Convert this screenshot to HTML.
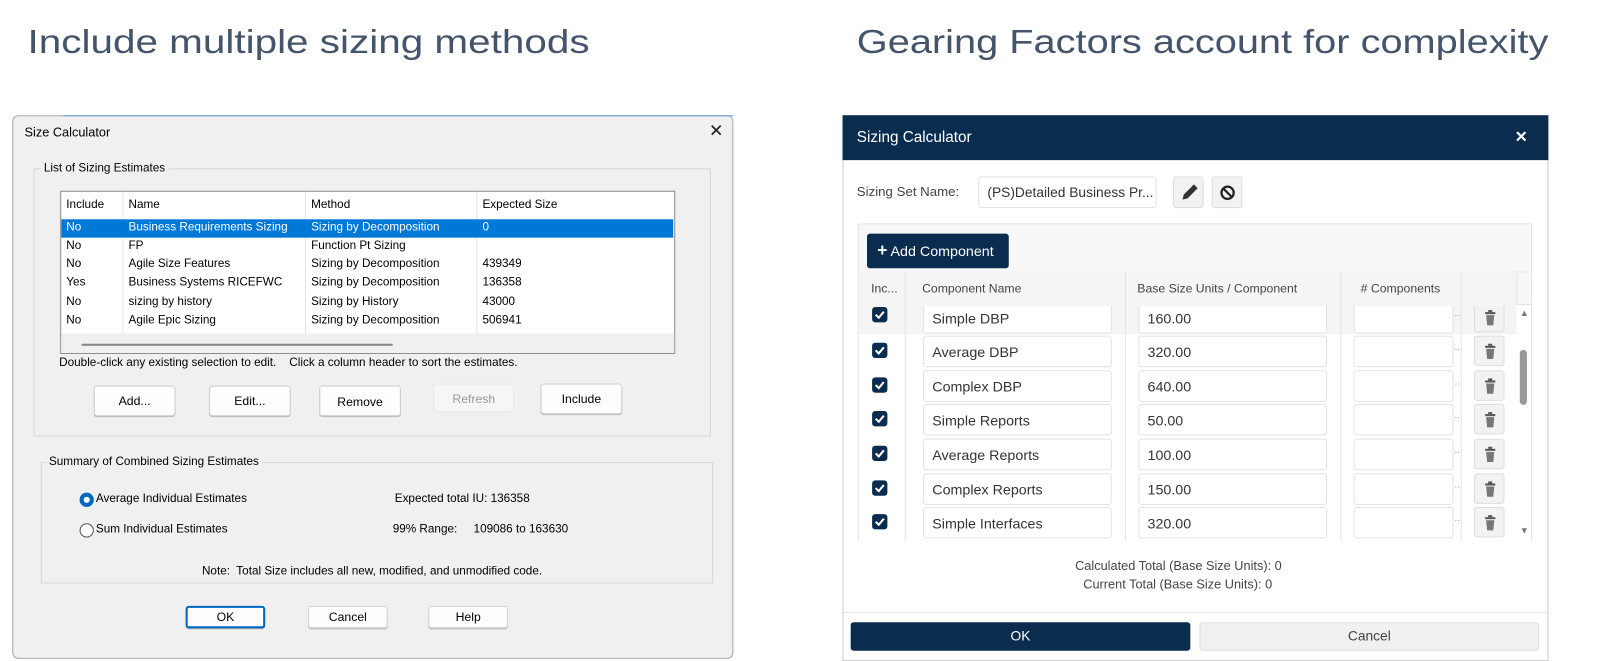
<!DOCTYPE html>
<html><head><meta charset="utf-8"><style>
*{box-sizing:border-box;margin:0;padding:0}
body{width:1600px;height:661px;background:#fff;overflow:hidden;font-family:"Liberation Sans",sans-serif;position:relative}
#w{position:absolute;left:0;top:0;width:1570px;height:648px;transform:scale(1.02);transform-origin:0 0}
.a{position:absolute}
.t{position:absolute;white-space:nowrap}
.s{font-size:11.5px;color:#000}
.wb{position:absolute;background:#fdfdfd;border:1px solid #d0d0d0;border-radius:3px;box-shadow:0 1px 0 #bbb;font-size:12px;text-align:center}
.r{position:absolute;left:0;width:600px;height:18px;font-size:11.5px}
.r span{position:absolute;top:2px}
.inp{position:absolute;background:#fff;border:1px solid #e2e2e2;border-radius:3px;font-size:14px;color:#333;padding-left:8px;line-height:30px;height:31px}
.tr{position:absolute;width:30px;height:30px;background:#f2f2f2;border:1px solid #ddd;border-radius:3px}
.cb{position:absolute;width:15px;height:15px;background:#0a2d4f;border-radius:3px}
.h{position:absolute;white-space:nowrap;font-size:12px;color:#444;z-index:5;top:10px}
</style></head><body><div id="w">
<svg class="a" style="left:0;top:0" width="1600" height="80">
<text x="27" y="52" font-family="Liberation Sans" font-size="33" fill="#44546a" textLength="551" lengthAdjust="spacingAndGlyphs">Include multiple sizing methods</text>
<text x="840" y="52" font-family="Liberation Sans" font-size="33" fill="#44546a" textLength="678" lengthAdjust="spacingAndGlyphs">Gearing Factors account for complexity</text>
</svg>

<!-- LEFT DIALOG -->
<div class="a" style="left:12px;top:113px;width:707px;height:533px;background:#f0f0f0;border:1px solid #a8a8a8;border-radius:6px"></div>
<div class="a" style="left:62px;top:113px;width:657px;height:1px;background:#6a9bd8"></div>
<div class="t s" style="left:24px;top:123px;font-size:12.5px">Size Calculator</div>
<div class="t" style="left:695px;top:119px;font-size:17px;color:#222">✕</div>

<div class="a" style="left:33px;top:165px;width:664px;height:263px;border:1px solid #d8d8d8"></div>
<div class="t s" style="left:40px;top:159px;background:#f0f0f0;padding:0 3px">List of Sizing Estimates</div>
<div class="a" style="left:59px;top:187px;width:603px;height:160px;background:#fff;border:1px solid #888;overflow:hidden">
 <div class="a" style="left:60px;top:0;width:1px;height:140px;background:#e6e6e6"></div>
 <div class="a" style="left:239px;top:0;width:1px;height:140px;background:#e6e6e6"></div>
 <div class="a" style="left:407px;top:0;width:1px;height:140px;background:#e6e6e6"></div>
 <div class="r" style="top:5px"><span style="left:5px">Include</span><span style="left:66px">Name</span><span style="left:245px">Method</span><span style="left:413px">Expected Size</span></div>
 <div class="r" style="top:27px;background:#0078d7;color:#fff"><span style="left:5px">No</span><span style="left:66px">Business Requirements Sizing</span><span style="left:245px">Sizing by Decomposition</span><span style="left:413px">0</span></div>
 <div class="r" style="top:45px"><span style="left:5px">No</span><span style="left:66px">FP</span><span style="left:245px">Function Pt Sizing</span></div>
 <div class="r" style="top:63px"><span style="left:5px">No</span><span style="left:66px">Agile Size Features</span><span style="left:245px">Sizing by Decomposition</span><span style="left:413px">439349</span></div>
 <div class="r" style="top:81px"><span style="left:5px">Yes</span><span style="left:66px">Business Systems RICEFWC</span><span style="left:245px">Sizing by Decomposition</span><span style="left:413px">136358</span></div>
 <div class="r" style="top:100px"><span style="left:5px">No</span><span style="left:66px">sizing by history</span><span style="left:245px">Sizing by History</span><span style="left:413px">43000</span></div>
 <div class="r" style="top:118px"><span style="left:5px">No</span><span style="left:66px">Agile Epic Sizing</span><span style="left:245px">Sizing by Decomposition</span><span style="left:413px">506941</span></div>
 <div class="a" style="left:0;top:139px;width:603px;height:21px;background:#f0f0f0"></div>
 <div class="a" style="left:20px;top:149px;width:305px;height:2px;background:#888"></div>
</div>
<div class="t s" style="left:58px;top:350px">Double-click any existing selection to edit.&nbsp;&nbsp;&nbsp; Click a column header to sort the estimates.</div>
<div class="wb" style="left:92px;top:378px;width:80px;height:30px;line-height:28px">Add...</div>
<div class="wb" style="left:205px;top:378px;width:80px;height:30px;line-height:28px">Edit...</div>
<div class="wb" style="left:313px;top:378px;width:80px;height:30px;line-height:30px">Remove</div>
<div class="wb" style="left:425px;top:376px;width:79px;height:28px;line-height:28px;background:#f6f6f6;color:#999;box-shadow:none;border-color:#e8e8e8">Refresh</div>
<div class="wb" style="left:530px;top:376px;width:80px;height:30px;line-height:28px">Include</div>

<div class="a" style="left:40px;top:453px;width:659px;height:119px;border:1px solid #d8d8d8"></div>
<div class="t s" style="left:46px;top:447px;background:#f0f0f0;padding:0 2px">Summary of Combined Sizing Estimates</div>
<div class="a" style="left:78px;top:483px;width:14px;height:14px;border-radius:50%;background:#0067c0"></div>
<div class="a" style="left:82px;top:487px;width:6px;height:6px;border-radius:50%;background:#fff"></div>
<div class="t s" style="left:94px;top:483px">Average Individual Estimates</div>
<div class="a" style="left:78px;top:513px;width:14px;height:14px;border-radius:50%;border:1px solid #555;background:#fff"></div>
<div class="t s" style="left:94px;top:513px">Sum Individual Estimates</div>
<div class="t s" style="left:387px;top:483px">Expected total IU: 136358</div>
<div class="t s" style="left:385px;top:513px">99% Range:&nbsp;&nbsp;&nbsp;&nbsp; 109086 to 163630</div>
<div class="t s" style="left:198px;top:554px">Note:&nbsp; Total Size includes all new, modified, and unmodified code.</div>
<div class="wb" style="left:182px;top:594px;width:78px;height:22px;line-height:19px;border:2px solid #0067c0">OK</div>
<div class="wb" style="left:302px;top:594px;width:78px;height:22px;line-height:21px">Cancel</div>
<div class="wb" style="left:420px;top:594px;width:78px;height:22px;line-height:21px">Help</div>

<!-- RIGHT DIALOG -->
<div class="a" style="left:826px;top:113px;width:692px;height:535px;background:#fff;border:1px solid #ccc"></div>
<div class="a" style="left:826px;top:113px;width:692px;height:44px;background:#0a2d4f"></div>
<div class="t" style="left:840px;top:126px;font-size:15px;color:#fff">Sizing Calculator</div>
<div class="t" style="left:1485px;top:125px;font-size:15px;color:#fff;font-weight:bold">✕</div>
<div class="t" style="left:840px;top:180px;font-size:13px;color:#444">Sizing Set Name:</div>
<div class="inp" style="left:959px;top:173px;width:175px;font-size:13.5px">(PS)Detailed Business Pr...</div>
<div class="a" style="left:1150px;top:173px;width:30px;height:31px;background:#f2f2f2;border:1px solid #ddd;border-radius:3px"><svg width="30" height="31"><path d="M9 21l1-4 8-8 3 3-8 8z M18 9l1.5-1.5 3 3L21 12" fill="#333" stroke="#333" stroke-width="1"/></svg></div>
<div class="a" style="left:1188px;top:173px;width:30px;height:31px;background:#f2f2f2;border:1px solid #ddd;border-radius:3px"><svg width="30" height="31"><circle cx="14.5" cy="15" r="6" fill="none" stroke="#222" stroke-width="2.2"/><path d="M10.5 11l8 8" stroke="#222" stroke-width="2.2"/></svg></div>

<div class="a" style="left:841px;top:219px;width:661px;height:311px;background:#f8f8f8;border:1px solid #e4e4e4"></div>
<div class="a" style="left:850px;top:229px;width:139px;height:34px;background:#0a2d4f;border-radius:3px;color:#fff;font-size:14px;line-height:34px;padding-left:10px"><b style="font-size:17px">+</b> Add Component</div>
<div class="a" style="left:842px;top:266px;width:659px;height:264px;background:#fff;overflow:hidden">
 <div class="a" style="left:0;top:0;width:659px;height:33px;background:#f8f8f8;border-top:1px solid #e4e4e4;border-bottom:1px solid #e4e4e4"></div>
 <div id="rows"></div>
 <div class="a" style="left:45px;top:0;width:1px;height:264px;background:#e4e4e4"></div>
 <div class="a" style="left:261px;top:0;width:1px;height:264px;background:#e4e4e4"></div>
 <div class="a" style="left:472px;top:0;width:1px;height:264px;background:#e4e4e4"></div>
 <div class="a" style="left:590px;top:0;width:1px;height:264px;background:#e4e4e4"></div>
 <div class="a" style="left:645px;top:0;width:1px;height:33px;background:#e4e4e4"></div>
 <div class="a" style="left:645px;top:34px;width:14px;height:230px;background:#fff"></div>
 <div class="t" style="left:648px;top:36px;font-size:9px;color:#777">▲</div>
 <div class="a" style="left:648px;top:77px;width:7px;height:54px;background:#999;border-radius:4px"></div>
 <div class="t" style="left:648px;top:249px;font-size:9px;color:#777">▼</div>
 <div class="h" style="left:12px">Inc...</div>
 <div class="h" style="left:62px">Component Name</div>
 <div class="h" style="left:273px">Base Size Units / Component</div>
 <div class="h" style="left:492px">#&nbsp;Components</div>
</div>

<div class="t" style="left:1054px;top:548px;font-size:12.5px;color:#444">Calculated Total (Base Size Units): 0</div>
<div class="t" style="left:1062px;top:566px;font-size:12.5px;color:#444">Current Total (Base Size Units): 0</div>
<div class="a" style="left:827px;top:600px;width:690px;height:1px;background:#e6e6e6"></div>
<div class="a" style="left:834px;top:610px;width:333px;height:28px;background:#0a2d4f;border-radius:3px;color:#fff;text-align:center;line-height:28px;font-size:13.5px">OK</div>
<div class="a" style="left:1176px;top:610px;width:333px;height:28px;background:#f0f0f0;border:1px solid #ddd;border-radius:3px;color:#444;text-align:center;line-height:26px;font-size:13.5px">Cancel</div>
</div>
<script>
var names=["Simple DBP","Average DBP","Complex DBP","Simple Reports","Average Reports","Complex Reports","Simple Interfaces"];
var vals=["160.00","320.00","640.00","50.00","100.00","150.00","320.00"];
var h="";
for(var i=0;i<7;i++){
 var c=[45,78,112,145,179,213,246][i];
 var top=c-16; var bg=(i%2==0)?"#f5f5f5":"#fff";
 var rt=(i==0)?34:top;
 h+='<div class="a" style="left:0;top:'+rt+'px;width:645px;height:'+(i==0?(c+17-34):34)+'px;background:'+bg+'"></div>';
 h+='<div class="cb" style="left:13px;top:'+(c-(i==0?10:8))+'px"><svg width="15" height="15"><path d="M3.5 7.5l3 3 5-6" fill="none" stroke="#fff" stroke-width="2"/></svg></div>';
 h+='<div class="inp" style="left:63px;top:'+(c-15)+'px;width:185px">'+names[i]+'</div>';
 h+='<div class="inp" style="left:274px;top:'+(c-15)+'px;width:185px">'+vals[i]+'</div>';
 h+='<div class="inp" style="left:485px;top:'+(c-15)+'px;width:98px"></div>';
 h+='<div class="t" style="left:584px;top:'+(c-9)+'px;font-size:9px;color:#999">...</div>';
 h+='<div class="tr" style="left:603px;top:'+(c-15)+'px"><svg width="30" height="30"><rect x="10" y="9" width="10" height="2" fill="#555"/><rect x="13" y="7" width="4" height="2" fill="#555"/><path d="M11 12h8l-1 10h-6z" fill="#777"/></svg></div>';
}
document.getElementById("rows").innerHTML=h;
</script>
</body></html>
